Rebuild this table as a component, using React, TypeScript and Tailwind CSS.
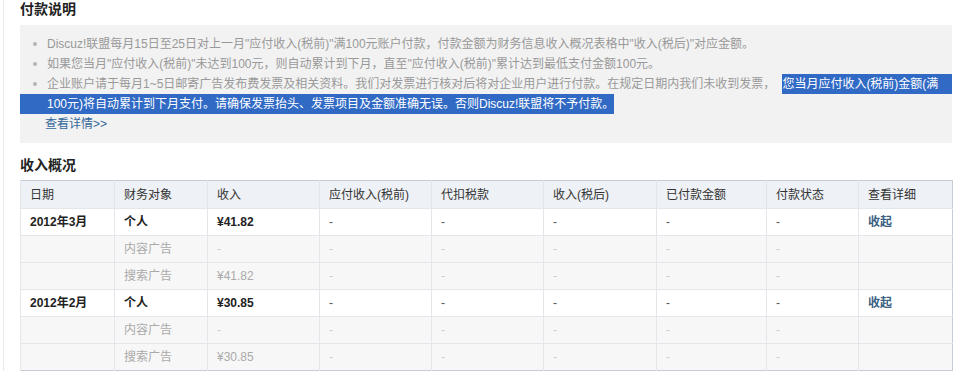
import React from "react";

const cols = [94, 93, 112, 112, 112, 113, 110, 92, 94];
const headers = ["日期", "财务对象", "收入", "应付收入(税前)", "代扣税款", "收入(税后)", "已付款金额", "付款状态", "查看详细"];

type Row = { main: boolean; date?: string; obj: string; income: string };
const rows: Row[] = [
  { main: true, date: "2012年3月", obj: "个人", income: "¥41.82" },
  { main: false, obj: "内容广告", income: "-" },
  { main: false, obj: "搜索广告", income: "¥41.82" },
  { main: true, date: "2012年2月", obj: "个人", income: "¥30.85" },
  { main: false, obj: "内容广告", income: "-" },
  { main: false, obj: "搜索广告", income: "¥30.85" },
];

function Dot() {
  return <span className="mt-[8px] h-[4px] w-[4px] shrink-0 rounded-full bg-[#b5b5b5]" />;
}

export default function App() {
  return (
    <div className="min-h-[371px] bg-white font-['Tahoma','Liberation_Sans','Noto_Sans_CJK_SC',sans-serif] text-[12px] text-[#333]">
      <div className="ml-[3px] border-l border-[#e8e8e8] pl-[16px] pr-[23px]">
        <div className="h-[25px] text-[14px] font-bold leading-[18px] text-[#222]">付款说明</div>
        <div className="bg-[#f2f2f2] pt-[9px] pb-[9px] leading-[20px] text-[#999]">
          <ul>
            <li className="flex pl-[13px]">
              <Dot />
              <span className="ml-[10px] whitespace-nowrap">
                Discuz!联盟每月15日至25日对上一月"应付收入(税前)"满100元账户付款，付款金额为财务信息收入概况表格中"收入(税后)"对应金额。
              </span>
            </li>
            <li className="flex pl-[13px]">
              <Dot />
              <span className="ml-[10px] whitespace-nowrap">
                如果您当月"应付收入(税前)"未达到100元，则自动累计到下月，直至"应付收入(税前)"累计达到最低支付金额100元。
              </span>
            </li>
            <li className="flex pl-[13px]">
              <Dot />
              <div className="ml-[10px] min-w-0 flex-1">
                <div className="flex whitespace-nowrap">
                  <span>企业账户请于每月1~5日邮寄广告发布费发票及相关资料。我们对发票进行核对后将对企业用户进行付款。在规定日期内我们未收到发票，</span>
                  <span className="ml-[7px] flex-1 bg-[#316ac5] text-white">您当月应付收入(税前)金额(满</span>
                </div>
                <div className="whitespace-nowrap">
                  <span className="-ml-[27px] inline-block bg-[#316ac5] pl-[27px] text-white">
                    100元)将自动累计到下月支付。请确保发票抬头、发票项目及金额准确无误。否则Discuz!联盟将不予付款。
                  </span>
                </div>
              </div>
            </li>
          </ul>
          <div className="pl-[25px]">
            <a className="text-[#336699]">查看详情&gt;&gt;</a>
          </div>
        </div>
        <div className="h-[37px] pt-[13px] text-[14px] font-bold leading-[18px] text-[#222]">收入概况</div>
        <table className="w-full table-fixed border-collapse border border-[#c5ccd6]">
          <colgroup>
            {cols.map((w, i) => (
              <col key={i} style={{ width: w }} />
            ))}
          </colgroup>
          <thead>
            <tr className="h-[28px] bg-[#eef1f6]">
              {headers.map((h) => (
                <th key={h} className="border-l border-[#e1e5eb] pl-[9px] text-left font-normal text-[#333]">
                  {h}
                </th>
              ))}
            </tr>
          </thead>
          <tbody>
            {rows.map((r, i) => {
              const cell = "border-l border-t border-[#e3e6ea] pl-[9px] text-left";
              if (r.main) {
                return (
                  <tr key={i} className="h-[27px] bg-white font-bold text-[#222]">
                    <td className={cell}>{r.date}</td>
                    <td className={cell}>{r.obj}</td>
                    <td className={cell}>{r.income}</td>
                    <td className={cell + " font-normal text-[#555]"}>-</td>
                    <td className={cell + " font-normal text-[#555]"}>-</td>
                    <td className={cell + " font-normal text-[#555]"}>-</td>
                    <td className={cell + " font-normal text-[#555]"}>-</td>
                    <td className={cell + " font-normal text-[#555]"}>-</td>
                    <td className={cell + " text-[#3a5f82]"}>收起</td>
                  </tr>
                );
              }
              return (
                <tr key={i} className="h-[27px] bg-[#f7f7f7] text-[#aaa]">
                  <td className={cell}></td>
                  <td className={cell}>{r.obj}</td>
                  <td className={cell + (r.income === "-" ? " text-[#ccc]" : "")}>{r.income}</td>
                  <td className={cell + " text-[#ccc]"}>-</td>
                  <td className={cell + " text-[#ccc]"}>-</td>
                  <td className={cell + " text-[#ccc]"}>-</td>
                  <td className={cell + " text-[#ccc]"}>-</td>
                  <td className={cell + " text-[#ccc]"}>-</td>
                  <td className={cell}></td>
                </tr>
              );
            })}
          </tbody>
        </table>
      </div>
    </div>
  );
}
